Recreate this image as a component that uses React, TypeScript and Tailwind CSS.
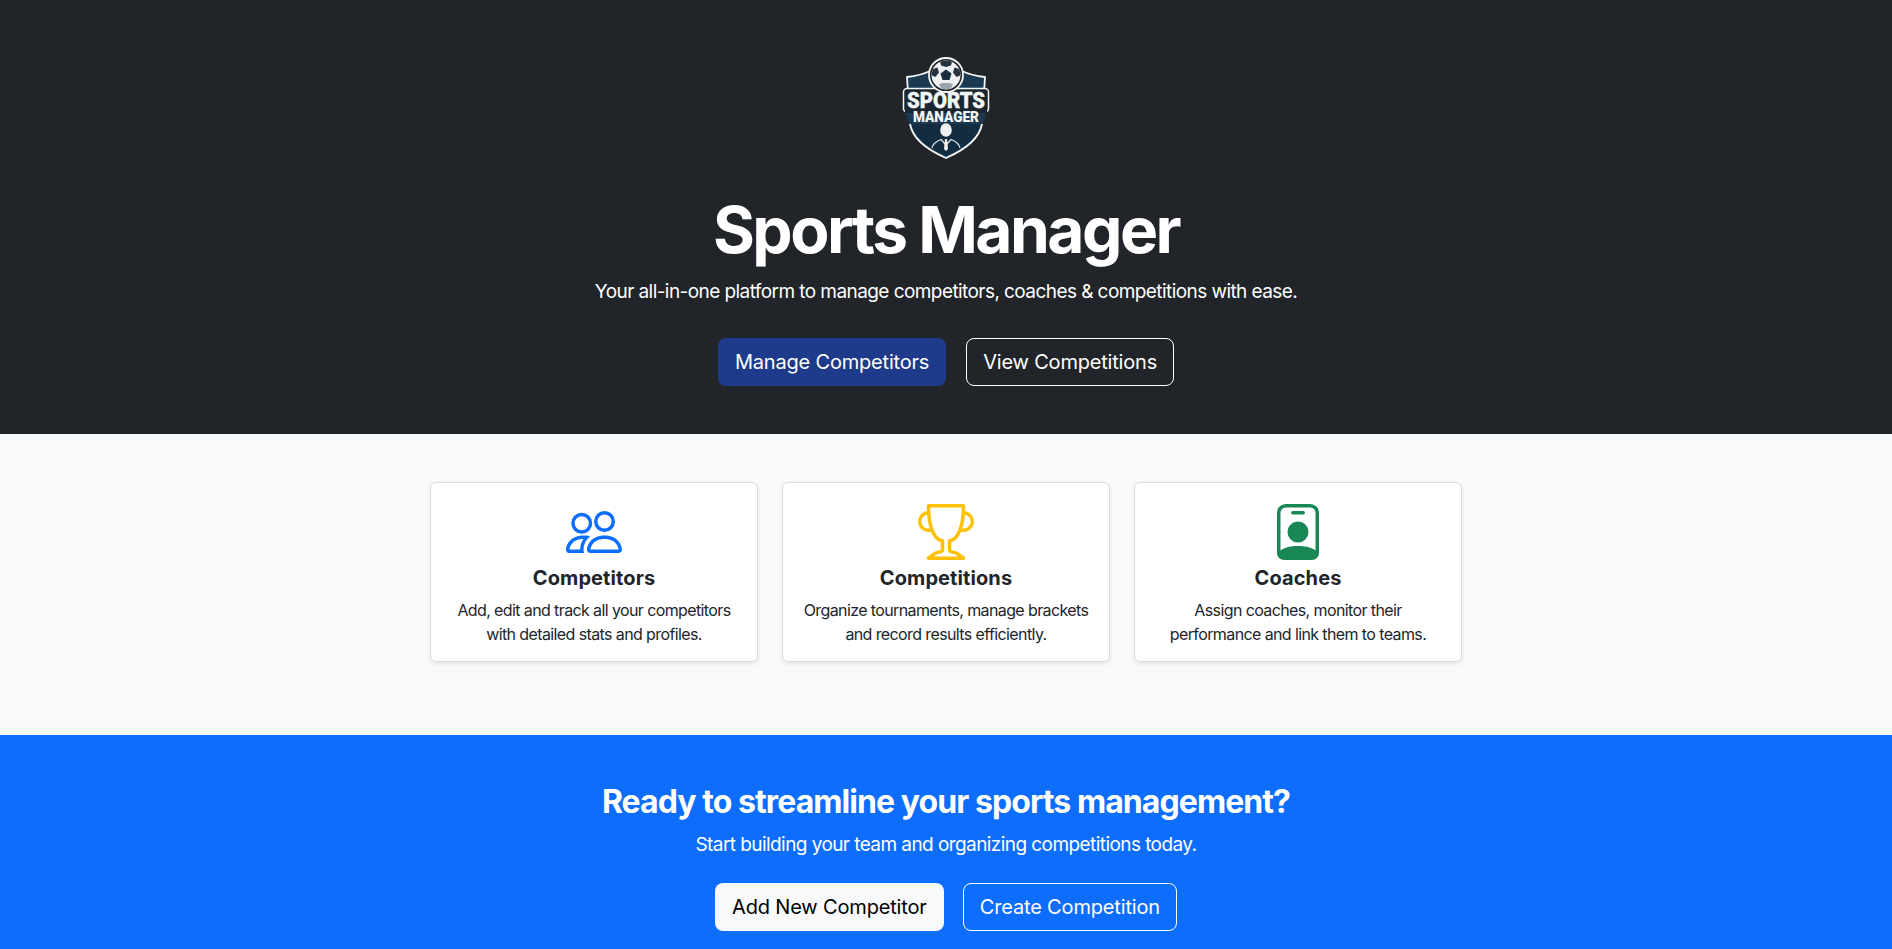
import { BsPeople, BsPersonBadge, BsTrophy } from "react-icons/bs";

const Logo = () => (
  <svg viewBox="886 48 120 120" className="h-[120px] w-[120px]" aria-label="Sports Manager logo">
    {/* shield */}
    <path
      d="M946 158 C930 151 913 141 910 124 L907 77 C917 76 924 74 930 71 L962 71 C968 74 975 76 985 77 L982 124 C979 141 962 151 946 158 Z"
      fill="#1b3a52"
      stroke="#f4f5f5"
      strokeWidth="1.800"
      strokeLinejoin="round"
    />
    <path d="M911.500 124 L980.500 124 C977 139 962 149 946 155.500 C930 149 915 139 911.500 124 Z" fill="#122c41" />
    {/* banner */}
    <rect x="903.500" y="88.500" width="85" height="23.500" rx="3.500" fill="#1a2730" stroke="#f4f5f5" strokeWidth="1.500" />
    <path d="M905 110 L987 110 L983 124 L909 124 Z" fill="#1b3a52" />
    <rect x="905" y="110" width="82" height="3" fill="#1a2730" />
    {/* ball */}
    <circle cx="946" cy="75" r="17" fill="#1b2229" stroke="#f4f5f5" strokeWidth="1.800" />
    <circle cx="946" cy="75" r="14.500" fill="#eef0f1" />
    <path d="M946 69.500 L951.500 73.500 L949.500 80 L942.500 80 L940.500 73.500 Z" fill="#1b2f40" />
    <path d="M940 61.800 C943.500 60.300 948.500 60.300 952 61.800 L951 65.500 L946 67 L941 65.500 Z" fill="#26333e" />
    <path d="M933 69 L937.500 67.500 L939 72.500 L935.500 77 L932 75.500 C931.600 73 932 71 933 69 Z" fill="#26333e" />
    <path d="M959 69 L954.500 67.500 L953 72.500 L956.500 77 L960 75.500 C960.400 73 960 71 959 69 Z" fill="#26333e" />
    <path d="M939 84 L943 83 L949 83 L953 84 L951 88.500 C948 89.600 944 89.600 941 88.500 Z" fill="#9aa5ad" />
    {/* wordmark */}
    <text
      x="946"
      y="108"
      textAnchor="middle"
      fontFamily="Roboto, sans-serif"
      fontWeight="900"
      fontSize="22.500"
      textLength="78"
      lengthAdjust="spacingAndGlyphs"
      fill="#f4f5f5"
      stroke="#f4f5f5"
      strokeWidth="0.400"
    >
      SPORTS
    </text>
    <text
      x="946"
      y="122"
      textAnchor="middle"
      fontFamily="Roboto, sans-serif"
      fontWeight="900"
      fontSize="14"
      textLength="66"
      lengthAdjust="spacingAndGlyphs"
      fill="#f4f5f5"
    >
      MANAGER
    </text>
    {/* manager figure */}
    <ellipse cx="946" cy="130" rx="5.800" ry="6.800" fill="#eef0f1" />
    <path d="M932 148 C933 143 937 141 941 139.500 L946 145 L951 139.500 C955 141 959 143 960 148" fill="none" stroke="#eef0f1" strokeWidth="1.200" />
    <path d="M945 139 L947 139 L948 149 L946 151 L944 149 Z" fill="#eef0f1" />
  </svg>
);

const features = [
  {
    title: "Competitors",
    icon: <BsPeople className="text-[#0d6efd]" size={56} />,
    lines: ["Add, edit and track all your competitors", "with detailed stats and profiles."],
  },
  {
    title: "Competitions",
    icon: <BsTrophy className="text-[#ffc107]" size={56} />,
    lines: ["Organize tournaments, manage brackets", "and record results efficiently."],
  },
  {
    title: "Coaches",
    icon: <BsPersonBadge className="text-[#198754]" size={56} />,
    lines: ["Assign coaches, monitor their", "performance and link them to teams."],
  },
];

export default function App() {
  return (
    <div className="flex h-screen flex-col overflow-hidden bg-white font-['Inter',sans-serif] text-[#212529]">
      <section className="flex h-[434px] flex-col items-center bg-[#212529] pt-12 text-white">
        <Logo />
        <h1 className="mt-[23px] text-[64px] leading-[77px] font-bold tracking-[-0.039em]">Sports Manager</h1>
        <p className="mt-[10px] text-[19px] leading-[27px] tracking-[-0.03em]">
          Your all-in-one platform to manage competitors, coaches &amp; competitions with ease.
        </p>
        <div className="mt-[33px] flex gap-5 tracking-[-0.012em]">
          <button className="h-12 rounded-lg bg-[#1e3a8a] px-[17px] text-xl">Manage Competitors</button>
          <button className="h-12 rounded-lg border border-white px-4 text-xl">View Competitions</button>
        </div>
      </section>

      <section className="flex h-[301px] justify-center gap-6 bg-[#f8f9fa] pt-12">
        {features.map((f) => (
          <div
            key={f.title}
            className="flex h-[180px] w-[328px] flex-col items-center rounded-md border border-[#d9dadb] bg-white pt-[21px] shadow-[0_2px_4px_rgba(0,0,0,0.075)]"
          >
            {f.icon}
            <h5 className="mt-[6px] text-xl leading-6 font-bold tracking-[0.005em]">{f.title}</h5>
            <p className="mt-[8px] text-center text-[16px] leading-6 tracking-[-0.038em]">
              {f.lines[0]}
              <br />
              {f.lines[1]}
            </p>
          </div>
        ))}
      </section>

      <section className="flex flex-1 flex-col items-center bg-[#0d6efd] pt-12 text-white">
        <h2 className="text-[32px] leading-[38px] font-bold tracking-[-0.029em]">
          Ready to streamline your sports management?
        </h2>
        <p className="mt-[10px] text-[19px] leading-[27px] tracking-[-0.03em]">
          Start building your team and organizing competitions today.
        </p>
        <div className="mt-[25px] flex gap-[19px] tracking-[-0.01em]">
          <button className="h-12 rounded-lg bg-[#f8f9fa] px-[17px] text-xl text-black">Add New Competitor</button>
          <button className="h-12 rounded-lg border border-white px-4 text-xl">Create Competition</button>
        </div>
      </section>
    </div>
  );
}
